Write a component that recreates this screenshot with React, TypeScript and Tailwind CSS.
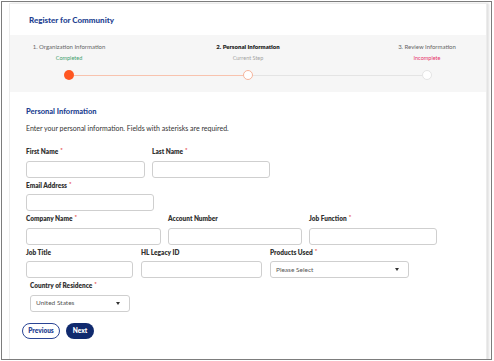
import { ReactNode } from "react";

const font = { fontFamily: "Lato, 'Open Sans', sans-serif" };

type FieldProps = {
  label: string;
  required?: boolean;
  width: string;
  children?: ReactNode;
};

const Field = ({ label, required, width, children }: FieldProps) => {
  return (
    <div className="flex flex-col">
      <div className="h-[8px] leading-[8px] text-[6.5px] font-extrabold text-[#333]">
        {label}
        {required && (
          <span className="relative -top-[2px] ml-[2px] text-[6px] font-bold text-[#e53935]">*</span>
        )}
      </div>
      <div
        className={`mt-[4.5px] h-[17px] ${width} rounded-[3px] border border-[#cfcfcf] bg-white`}
      >
        {children}
      </div>
    </div>
  );
};

const SelectBox = ({ text }: { text: string }) => (
  <div className="flex h-full items-center justify-between pl-[5px] pr-[9px]">
    <span className="text-[6.5px] text-[#555]">{text}</span>
    <span className="h-0 w-0 border-x-[2px] border-t-[3px] border-x-transparent border-t-[#333]" />
  </div>
);

const steps = [
  { name: "1. Organization Information", status: "Completed", color: "text-[#3f9f6e]", bold: false },
  { name: "2. Personal Information", status: "Current Step", color: "text-[#a3a3a3]", bold: true },
  { name: "3. Review Information", status: "Incomplete", color: "text-[#e6336a]", bold: false },
];

export default function App() {
  return (
    <div className="h-[361px] w-[494px] bg-white pl-[1px] pt-[1px]" style={font}>
      <div className="h-[359px] w-[491px] overflow-hidden border border-[#7d7d7d] pl-[7px] pt-[1px]">
        <div className="h-[360px] w-[478px] border-x border-t border-[#ececec] bg-white shadow-[2px_0_2px_rgba(0,0,0,0.12)]">
          <div className="flex h-[31px] items-center pl-[19px]">
            <h1 className="text-[8px] font-black text-[#233f91]">Register for Community</h1>
          </div>

          {/* stepper */}
          <div className="h-[57px] bg-[#f6f6f6] pt-[8px]">
            <div className="flex justify-between px-[9px]">
              {steps.map((s) => (
                <div key={s.name} className="flex w-[100px] flex-col items-center">
                  <div
                    className={`h-[7px] leading-[7px] text-[6px] ${
                      s.bold ? "font-extrabold text-[#222]" : "text-[#666]"
                    }`}
                  >
                    {s.name}
                  </div>
                  <div className={`mt-[5px] h-[7px] leading-[7px] text-[5.5px] ${s.color}`}>
                    {s.status}
                  </div>
                </div>
              ))}
            </div>
            <div className="mt-[8px] flex items-center pl-[54px] pr-[54px]">
              <div className="h-[10px] w-[10px] rounded-full bg-[#ff5722]" />
              <div className="h-[1px] flex-1 bg-[#f8c3ae]" />
              <div className="h-[10px] w-[10px] rounded-full border border-[#f6b49b] bg-white" />
              <div className="h-[1px] flex-1 bg-[#e4e4e4]" />
              <div className="h-[10px] w-[10px] rounded-full border border-[#e4e4e4] bg-white" />
            </div>
          </div>

          {/* form */}
          <div className="pl-[16px] pt-[15px]">
            <h2 className="h-[9px] leading-[9px] text-[7.5px] font-black text-[#233f91]">
              Personal Information
            </h2>
            <p className="mt-[8px] h-[8px] leading-[8px] text-[7px] text-[#333]">
              Enter your personal information. Fields with asterisks are required.
            </p>

            <div className="mt-[16px] flex flex-col gap-[4px]">
              <div className="flex gap-[7px]">
                <Field label="First Name" required width="w-[119px]" />
                <Field label="Last Name" required width="w-[118px]" />
              </div>
              <div className="flex">
                <Field label="Email Address" required width="w-[128px]" />
              </div>
              <div className="flex gap-[7px]">
                <Field label="Company Name" required width="w-[135px]" />
                <Field label="Account Number" width="w-[134px]" />
                <Field label="Job Function" required width="w-[128px]" />
              </div>
              <div className="flex gap-[8px]">
                <Field label="Job Title" width="w-[107px]" />
                <Field label="HL Legacy ID" width="w-[121px]" />
                <Field label="Products Used" required width="w-[139px]">
                  <SelectBox text="Please Select" />
                </Field>
              </div>
              <div className="flex pl-[4px]">
                <Field label="Country of Residence" required width="w-[100px]">
                  <SelectBox text="United States" />
                </Field>
              </div>
            </div>

            <div className="-ml-[4px] mt-[11px] flex gap-[6px]">
              <button className="h-[16px] w-[38px] rounded-full border border-[#2a4494] text-[6.5px] font-extrabold text-[#2a4494]">
                Previous
              </button>
              <button className="h-[16px] w-[28px] rounded-full bg-[#102a6e] text-[6.5px] font-extrabold text-white">
                Next
              </button>
            </div>
          </div>
        </div>
      </div>
    </div>
  );
}
